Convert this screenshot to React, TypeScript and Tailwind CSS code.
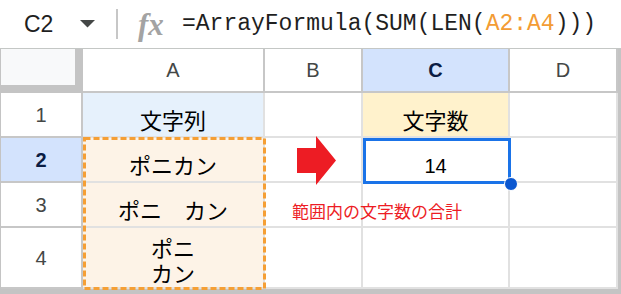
import React from "react";

const SANS = "font-['Liberation_Sans',Arial,'Noto_Sans_CJK_JP',sans-serif]";
const CJK = "font-['Noto_Sans_CJK_JP','Liberation_Sans',sans-serif]";

function ColHead({ label, active = false }: { label: string; active?: boolean }) {
  return (
    <div
      className={`flex items-center justify-center border-r-2 border-b-2 border-[#c7c7c7] text-[20px] ${SANS} ${
        active ? "bg-[#d3e3fd] font-bold text-[#0b1d44]" : "bg-white text-[#444746]"
      }`}
    >
      {label}
    </div>
  );
}

function RowHead({ label, active = false }: { label: string; active?: boolean }) {
  return (
    <div
      className={`flex items-center justify-center border-r-2 border-b-2 border-[#c7c7c7] text-[20px] ${SANS} ${
        active ? "bg-[#d3e3fd] font-bold text-[#0b1d44]" : "bg-white text-[#444746]"
      }`}
    >
      {label}
    </div>
  );
}

export default function App() {
  return (
    <div className="w-[621px] h-[294px] overflow-hidden bg-white">
      {/* formula bar */}
      <div className="flex h-[49px] items-center border-b border-[#c4c7c5]">
        <div className="flex w-[116px] items-center pl-[24px]">
          <span className={`text-[23px] text-[#1f1f1f] ${SANS}`}>C2</span>
          <svg className="ml-auto mr-[21px]" width="15" height="8" viewBox="0 0 15 8">
            <polygon points="0,0 15,0 7.5,7.5" fill="#444746" />
          </svg>
        </div>
        <div className="h-[30px] w-[2px] bg-[#c7c7c7]" />
        <span className="ml-[20px] w-[30px] font-['Liberation_Serif',serif] text-[31px] font-bold italic leading-none text-[#a3a3a3]">
          fx
        </span>
        <span className="ml-[14px] whitespace-nowrap font-['Liberation_Mono',monospace] text-[23px] text-[#1f1f1f]">
          =ArrayFormula(SUM(LEN(<span className="text-[#f39c34]">A2:A4</span>)))
        </span>
      </div>

      {/* grid */}
      <div className="relative grid grid-cols-[82px_182px_98px_147px_108px] grid-rows-[44px_45px_45px_45px_61px] border-l border-r-[3px] border-b-[5px] border-[#c4c4c4]">
        {/* header row */}
        <div className="border-r-[8px] border-b-[8px] border-[#c4c4c4] bg-[#f8f9fa]" />
        <ColHead label="A" />
        <ColHead label="B" />
        <ColHead label="C" active />
        <ColHead label="D" />

        {/* row 1 */}
        <RowHead label="1" />
        <div className={`flex items-end justify-center border-r-2 border-b-2 border-[#e1e1e1] bg-[#e6f1fc] pb-[4px] text-[22px] leading-[25px] text-black ${CJK}`}>
          文字列
        </div>
        <div className="border-r-2 border-b-2 border-[#e1e1e1]" />
        <div className={`flex items-end justify-center border-r-2 border-b-2 border-[#e1e1e1] bg-[#fff2cc] pb-[4px] text-[22px] leading-[25px] text-black ${CJK}`}>
          文字数
        </div>
        <div className="border-r-2 border-b-2 border-[#e1e1e1]" />

        {/* row 2 */}
        <RowHead label="2" active />
        <div className={`flex items-end justify-center border-r-2 border-b-2 border-[#e1e1e1] bg-[#fdf3e7] pb-[4px] text-[22px] leading-[25px] text-black ${CJK}`}>
          ポニカン
        </div>
        <div className="border-r-2 border-b-2 border-[#e1e1e1]" />
        <div className={`flex items-end justify-center border-r-2 border-b-2 border-[#e1e1e1] pb-[5px] text-[20px] leading-none text-black ${SANS}`}>
          14
        </div>
        <div className="border-r-2 border-b-2 border-[#e1e1e1]" />

        {/* row 3 */}
        <RowHead label="3" />
        <div className={`flex items-end justify-center whitespace-pre border-r-2 border-b-2 border-[#e1e1e1] bg-[#fdf3e7] pb-[4px] text-[22px] leading-[25px] text-black ${CJK}`}>
          ポニ　カン
        </div>
        <div className={`relative z-10 flex items-end whitespace-nowrap border-r-2 border-b-2 border-[#e1e1e1] pl-[27px] pb-[7px] text-[17px] leading-none text-[#ed1c24] ${CJK}`}>
          範囲内の文字数の合計
        </div>
        <div className="border-r-2 border-b-2 border-[#e1e1e1]" />
        <div className="border-r-2 border-b-2 border-[#e1e1e1]" />

        {/* row 4 */}
        <RowHead label="4" />
        <div className={`flex items-end justify-center border-r-2 border-b-2 border-[#e1e1e1] bg-[#fdf3e7] pb-[2px] text-center text-[22px] leading-[25px] text-black ${CJK}`}>
          <span>
            ポニ
            <br />
            カン
          </span>
        </div>
        <div className="border-r-2 border-b-2 border-[#e1e1e1]" />
        <div className="border-r-2 border-b-2 border-[#e1e1e1]" />
        <div className="border-r-2 border-b-2 border-[#e1e1e1]" />

        {/* copy-range dashed outline (A2:A4) */}
        <svg className="pointer-events-none absolute left-[82px] top-[88px] z-20" width="184" height="155" viewBox="0 0 184 155">
          <rect x="1.5" y="1.5" width="180" height="150" fill="none" stroke="#f59f35" strokeWidth="3" strokeDasharray="6 3" />
        </svg>

        {/* active cell selection C2 */}
        <div className="pointer-events-none absolute left-[362px] top-[89px] z-20 h-[46px] w-[148px] border-[3px] border-[#1a73e8]" />
        <div className="pointer-events-none absolute left-[503px] top-[128px] z-30 h-[14px] w-[14px] rounded-full border border-white bg-[#0b57d0]" />

        {/* red arrow */}
        <svg className="pointer-events-none absolute left-[295px] top-[86px] z-20" width="41" height="51" viewBox="0 0 41 51">
          <polygon points="1,13 20,13 20,1 40,25.5 20,50 20,38 1,38" fill="#ed1c24" />
        </svg>
      </div>
    </div>
  );
}
